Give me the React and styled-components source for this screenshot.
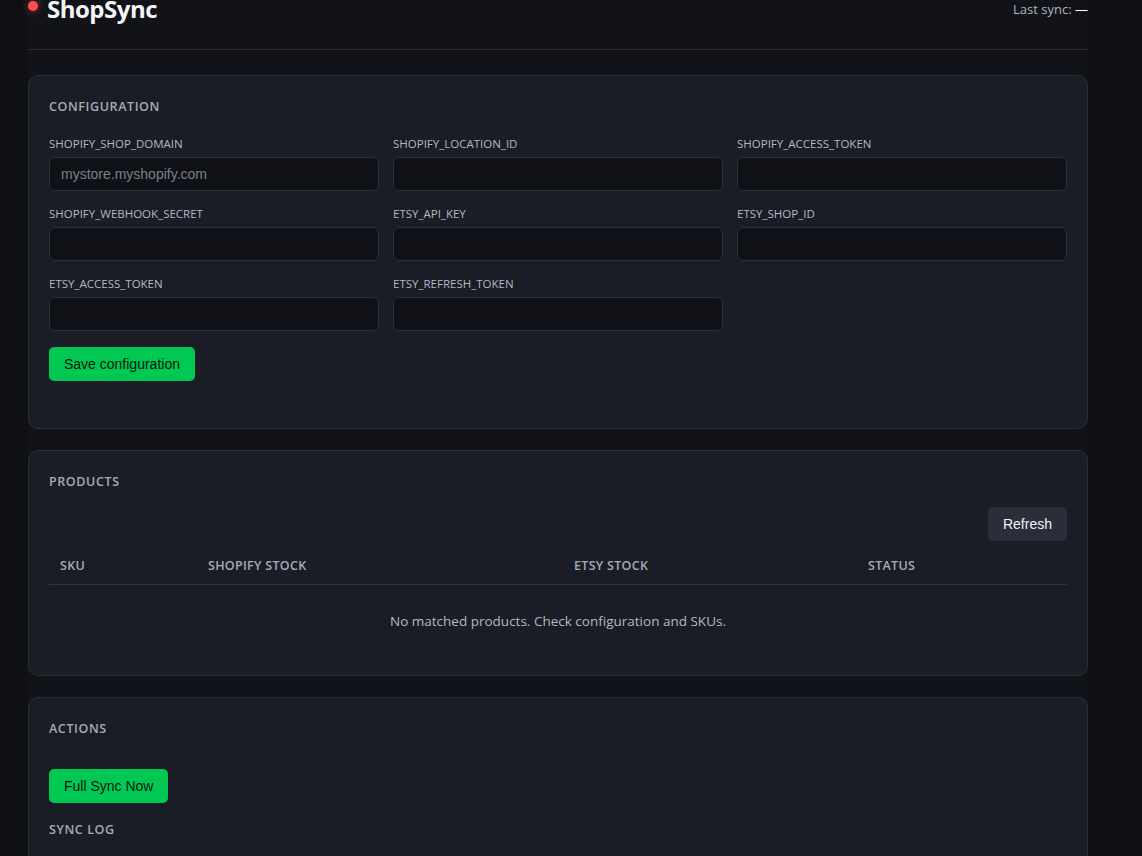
import styled, { createGlobalStyle } from 'styled-components'

const Global = createGlobalStyle`
	body {
		margin: 0;
		background: #0e1015;
		color: #e6e8ee;
		font-family: "Open Sans", "Noto Sans", sans-serif;
		overflow: hidden;
	}
`

const Page = styled.div`
	width: 1060px;
	margin: 0 0 0 28px;
	background: #111319;
	min-height: 856px;
	display: flex;
	flex-direction: column;
	gap: 21px;
`

const Header = styled.header`
	display: flex;
	justify-content: space-between;
	align-items: flex-start;
	height: 59px;
	margin-top: -10px;
	border-bottom: 1px solid #2a2d36;
	margin-bottom: 4px;
`

const Brand = styled.div`
	display: flex;
	align-items: center;
	gap: 9px;
	padding-top: 2px;
	h1 {
		margin: 0;
		font-size: 24px;
		font-weight: 700;
		letter-spacing: -0.5px;
		color: #f3f4f7;
	}
`

const Dot = styled.span`
	width: 10px;
	height: 10px;
	border-radius: 50%;
	background: #ff4d4f;
	box-shadow: 0 0 8px rgba(255, 77, 79, 0.6);
	margin-top: -6px;
`

const LastSync = styled.div`
	font-size: 13px;
	color: #aeb3bf;
	margin-top: 10px;
	span { color: #fff; }
`

const Card = styled.section`
	background: #1a1d25;
	border: 1px solid #2a2e38;
	border-radius: 10px;
	padding: 22px 20px ${({ pb }) => pb || '20px'};
`

const Title = styled.h2`
	margin: 0 0 ${({ mb }) => mb || '18px'};
	font-size: 12.5px;
	font-weight: 600;
	letter-spacing: 0.6px;
	color: #a6abb8;
`

const Grid = styled.div`
	display: grid;
	grid-template-columns: repeat(3, 330px);
	column-gap: 14px;
	row-gap: 15px;
`

const Field = styled.label`
	display: flex;
	flex-direction: column;
	gap: 6px;
	font-size: 11.5px;
	color: #b3b8c4;
`

const Input = styled.input`
	height: 34px;
	box-sizing: border-box;
	background: #0f1117;
	border: 1px solid #2c303a;
	border-radius: 6px;
	padding: 0 11px;
	font-family: "Liberation Sans", Arial, sans-serif;
	font-size: 14px;
	color: #ddd;
	&::placeholder { color: #7c808a; }
`

const Button = styled.button`
	font-family: "Liberation Sans", Arial, sans-serif;
	font-size: 14px;
	height: 34px;
	padding: 0 15px;
	border: 0;
	border-radius: 5px;
	background: ${({ secondary }) => (secondary ? '#2a2e3a' : '#00c853')};
	color: ${({ secondary }) => (secondary ? '#f0f1f4' : '#0b1a10')};
	width: fit-content;
`

const Toolbar = styled.div`
	display: flex;
	justify-content: flex-end;
	margin: 6px 0 6px;
`

const Table = styled.table`
	width: 100%;
	border-collapse: collapse;
	font-size: 12.5px;
	th {
		text-align: left;
		font-weight: 600;
		color: #a6abb8;
		padding: 0 11px;
		height: 37px;
		border-bottom: 1px solid #2e323c;
		letter-spacing: 0.3px;
	}
	td {
		text-align: center;
		color: #b3b8c4;
		font-size: 13.5px;
		height: 70px;
	}
`

const fields = [
	['SHOPIFY_SHOP_DOMAIN', 'mystore.myshopify.com'],
	['SHOPIFY_LOCATION_ID'],
	['SHOPIFY_ACCESS_TOKEN'],
	['SHOPIFY_WEBHOOK_SECRET'],
	['ETSY_API_KEY'],
	['ETSY_SHOP_ID'],
	['ETSY_ACCESS_TOKEN'],
	['ETSY_REFRESH_TOKEN'],
]

export default function App() {
	return (
		<>
			<Global />
			<Page>
				<Header>
					<Brand>
						<Dot />
						<h1>ShopSync</h1>
					</Brand>
					<LastSync>Last sync: <span>—</span></LastSync>
				</Header>

				<Card pb="47px">
					<Title mb="21px">CONFIGURATION</Title>
					<Grid>
						{fields.map(([name, ph]) => (
							<Field key={name}>
								{name}
								<Input placeholder={ph || ''} />
							</Field>
						))}
					</Grid>
					<div style={{ marginTop: 16 }}>
						<Button>Save configuration</Button>
					</div>
				</Card>

				<Card pb="18px">
					<Title mb="17px">PRODUCTS</Title>
					<Toolbar>
						<Button secondary>Refresh</Button>
					</Toolbar>
					<Table>
						<thead>
							<tr>
								<th style={{ width: 126 }}>SKU</th>
								<th style={{ width: 344 }}>SHOPIFY STOCK</th>
								<th style={{ width: 272 }}>ETSY STOCK</th>
								<th>STATUS</th>
							</tr>
						</thead>
						<tbody>
							<tr>
								<td colSpan={4}>No matched products. Check configuration and SKUs.</td>
							</tr>
						</tbody>
					</Table>
				</Card>

				<Card>
					<Title mb="32px">ACTIONS</Title>
					<Button>Full Sync Now</Button>
					<Title style={{ marginTop: 18 }}>SYNC LOG</Title>
				</Card>
			</Page>
		</>
	)
}
